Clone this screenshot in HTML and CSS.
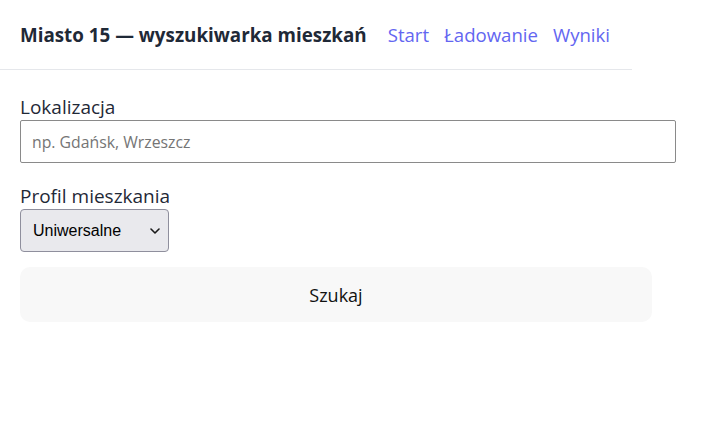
FILE: index.html
```html
<!DOCTYPE html>
<html lang="pl">
<head>
<meta charset="utf-8">
<title>Miasto 15 — wyszukiwarka mieszkań</title>
<link rel="stylesheet" href="styles.css">
</head>
<body>
<header class="topbar">
  <span class="brand">Miasto 15 — wyszukiwarka mieszkań</span>
  <nav class="nav">
    <a href="#" class="nav-link">Start</a>
    <a href="#" class="nav-link">Ładowanie</a>
    <a href="#" class="nav-link">Wyniki</a>
  </nav>
</header>
<main class="content">
  <form class="search-form">
    <label class="field-label" for="loc">Lokalizacja</label>
    <input class="text-input" id="loc" type="text" placeholder="np. Gdańsk, Wrzeszcz">
    <label class="field-label field-label-gap" for="prof">Profil mieszkania</label>
    <div class="select-wrap">
      <select class="select" id="prof">
        <option>Uniwersalne</option>
      </select>
      <svg class="select-arrow" width="10" height="6" viewBox="0 0 10 6" aria-hidden="true">
        <path d="M1 1 L5 5 L9 1" fill="none" stroke="#1a1a1a" stroke-width="1.6" stroke-linecap="round" stroke-linejoin="round"/>
      </svg>
    </div>
    <button type="button" class="submit">Szukaj</button>
  </form>
</main>
</body>
</html>
```

FILE: styles.css
```css
html, body {
  margin: 0;
  padding: 0;
  background: #ffffff;
}

body {
  font-family: "Open Sans", "Noto Sans", sans-serif;
  color: #1f2937;
}

.topbar {
  width: 632px;
  height: 70px;
  box-sizing: border-box;
  border-bottom: 1px solid #e5e7eb;
  display: flex;
  align-items: center;
  padding: 0 0 0 20px;
}

.brand {
  font-size: 18.8px;
  font-weight: 700;
  color: #1f2937;
  margin-right: 21px;
  white-space: nowrap;
}

.nav {
  display: flex;
  gap: 15px;
}

.nav-link {
  font-size: 18.6px;
  color: #6366f1;
  text-decoration: none;
}

.content {
  padding: 24px 20px 0 20px;
}

.search-form {
  display: flex;
  flex-direction: column;
  align-items: flex-start;
}

.field-label {
  font-size: 19px;
  line-height: 26px;
  color: #1f2937;
}

.field-label-gap {
  margin-top: 20px;
}

.text-input {
  width: 656px;
  height: 43px;
  box-sizing: border-box;
  border: 1px solid #8a8a8a;
  border-radius: 2px;
  padding: 0 11px;
  font-family: "Open Sans", sans-serif;
  font-size: 15.8px;
  color: #1f2937;
}

.text-input::placeholder {
  color: #757575;
}

.select-wrap {
  position: relative;
  width: 149px;
  height: 43px;
}

.select {
  appearance: none;
  -webkit-appearance: none;
  width: 149px;
  height: 43px;
  box-sizing: border-box;
  border: 1px solid #8f8f9d;
  border-radius: 4px;
  background: #e9e9ed;
  font-family: "Liberation Sans", Arial, sans-serif;
  font-size: 16px;
  color: #000;
  padding: 0 12px;
}

.select-arrow {
  position: absolute;
  left: 130px;
  top: 19px;
  pointer-events: none;
}

.submit {
  margin-top: 15px;
  width: 632px;
  height: 55px;
  border: none;
  border-radius: 10px;
  background: #f8f8f8;
  font-family: "Open Sans", sans-serif;
  font-size: 18px;
  color: #111;
}
```
